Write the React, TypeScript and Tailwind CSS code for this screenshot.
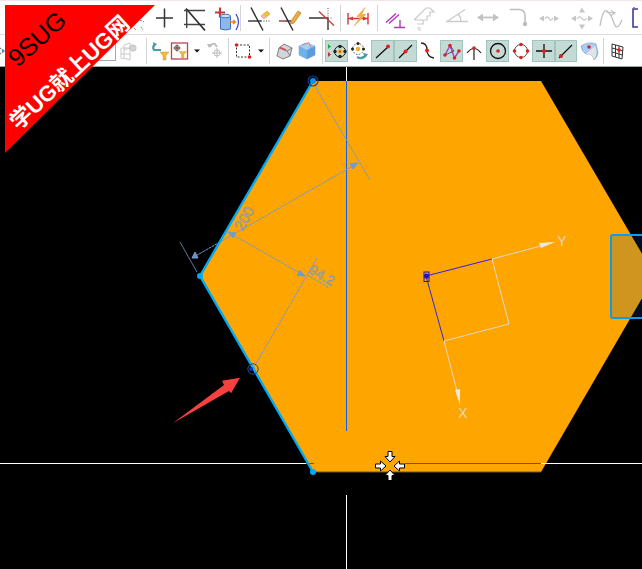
import React from "react";

const ICON_RED = "#e02020";

function Sep() {
  return <div className="w-px h-[26px] bg-[#d4d4d4] shrink-0" />;
}

// top row slot: 24px wide, svg coords centred on the slot
function Top({ className, children }: { className?: string; children: React.ReactNode }) {
  return (
    <svg viewBox="0 0 24 24" fill="none" className={`w-6 h-6 shrink-0 overflow-visible ${className ?? ""}`}>
      {children}
    </svg>
  );
}

// bottom row slot: 20x22
function Bot({ className, children }: { className?: string; children: React.ReactNode }) {
  return (
    <svg viewBox="0 0 20 22" fill="none" className={`w-5 h-[22px] shrink-0 overflow-visible ${className ?? ""}`}>
      {children}
    </svg>
  );
}

function Tile({ className, children }: { className?: string; children: React.ReactNode }) {
  return (
    <div className={`h-[22px] shrink-0 bg-[#c4dbd5] border border-[#a2c5bb] flex items-center justify-center ${className ?? ""}`}>
      <svg viewBox="0 0 20 20" fill="none" className="w-5 h-5 overflow-visible">
        {children}
      </svg>
    </div>
  );
}

function Caret({ className }: { className?: string }) {
  return (
    <svg viewBox="0 0 10 6" className={`w-2.5 h-1.5 shrink-0 ${className ?? ""}`}>
      <path d="M2 1.5H8L5 4.5Z" fill="#111" />
    </svg>
  );
}

const Dot = ({ x, y, r = 1.8 }: { x: number; y: number; r?: number }) => <circle cx={x} cy={y} r={r} fill={ICON_RED} />;

function TopRow() {
  return (
    <div className="flex items-center h-[33px] pl-[126px] bg-white overflow-hidden">
      <Top>
        <path d="M6 17Q12 12 18 16" stroke="#555" strokeDasharray="1.5 1.5" />
        <path d="M8 22L10 24M15 21L17 24" stroke="#c04040" strokeDasharray="1 1" />
      </Top>
      <Top className="ml-[3px]">
        <path d="M3 12H20M11.5 2.5V21.5" stroke="#333" strokeWidth="1.5" />
      </Top>
      <Top className="ml-[6px]">
        <path d="M1 4.5H22M1 18.5H22M3.7 3V22" stroke="#444" strokeWidth="1.4" />
        <path d="M3 2.5L22 24.5" stroke="#333" strokeWidth="1.8" />
      </Top>
      <Top className="ml-[9px]">
        <path d="M-1 6.5H9M4 1.5V11.5" stroke="#c83a3a" strokeWidth="2.2" />
        <path d="M4.5 10V23Q9.5 25 14.5 23V10Z" fill="#8db6ea" stroke="#3f70c2" />
        <ellipse cx="9.5" cy="10" rx="5" ry="1.8" fill="#cfe0f6" stroke="#3f70c2" />
        <path d="M14 16H19M17 14L19.5 16L17 18" stroke="#e8801c" strokeWidth="1.3" />
        <path d="M20 8Q25 16 20 24" stroke="#3838d0" strokeWidth="1.2" />
      </Top>
      <Sep />
      <Top className="ml-[5px]">
        <path d="M2 15H15" stroke="#333" strokeWidth="1.4" />
        <path d="M15 15H24" stroke="#333" strokeDasharray="1 1.5" />
        <path d="M5 1.5L17 24.5" stroke="#333" strokeWidth="1.5" />
        <path d="M15 10L21 5L24 8L18 13Z" fill="#f1c232" stroke="#c89b30" strokeWidth=".6" />
        <path d="M15 10L17 8.4L20 11.4L18 13Z" fill="#f2b8b8" />
      </Top>
      <Top className="ml-[6px]">
        <path d="M3 15H10" stroke="#a03030" strokeWidth="1.4" />
        <path d="M10 15H15" stroke="#333" strokeWidth="1.4" />
        <path d="M5 1.5L17 24.5" stroke="#333" strokeWidth="1.5" />
        <path d="M15 15L22 5L25 7L18 17L14.5 18Z" fill="#f5a83c" stroke="#a87a28" strokeWidth=".7" />
      </Top>
      <Top className="ml-[7px]">
        <path d="M2 12H21M21 12V24" stroke="#333" strokeWidth="1.4" />
        <path d="M21 2V12M21 12H26" stroke="#555" strokeDasharray="1 1.5" />
        <path d="M12 5.5L27 19.5" stroke="#d83a3a" strokeWidth="1.4" />
      </Top>
      <div className="ml-[9px]">
        <Sep />
      </div>
      <Top className="ml-[5px]">
        <path d="M2 7V18.5M22 7V18.5M2 12.5H22" stroke="#d8343a" strokeWidth="1.4" />
        <path d="M2.5 12.5L7 10.5V14.5ZM21.5 12.5L17 10.5V14.5Z" fill="#d8343a" />
        <path d="M19 1.5L11 10.5H15L8 20L20 8.5H15.5Z" fill="#f7b338" stroke="#e8962a" strokeWidth=".5" />
      </Top>
      <div className="ml-[7px]">
        <Sep />
      </div>
      <Top className="ml-[4px]">
        <path d="M4 16.5L14 7.5M7 17.5L17 8.5" stroke="#b43cc4" strokeWidth="1.5" />
        <path d="M12 21.5H23M18 14V21.5" stroke="#a83cb8" strokeWidth="1.4" />
      </Top>
      <Top className="ml-[6px]">
        <path d="M2 14L14 2H18L22 6H18V10H15V14H11V18M3 14H11M5 18H12M5 22H9" stroke="#cacaca" strokeWidth="1.2" />
        <path d="M6 24H9" stroke="#cacaca" />
      </Top>
      <Top className="ml-[8px]">
        <path d="M2 15.5H24M3 15.5L21 3.5M14 7.5Q17 11 17 15.5" stroke="#cccccc" strokeWidth="1.4" />
      </Top>
      <Top className="ml-[8px]">
        <path d="M6 11.5H18" stroke="#c2c2c2" strokeWidth="1.8" />
        <path d="M1 11.5L7 7.5V15.5ZM23 11.5L17 7.5V15.5Z" fill="#c2c2c2" />
      </Top>
      <Top className="ml-[9px]">
        <path d="M1 3.5H10Q16 3.5 16 10V17" stroke="#bdbdbd" strokeWidth="1.5" />
        <circle cx="16" cy="18" r="2.2" fill="#bdbdbd" />
      </Top>
      <Top className="ml-[4px]">
        <path d="M2 12.5L7 9.5V15.5ZM22 12.5L17 9.5V15.5Z" fill="#c6c6c6" />
        <path d="M8 13Q10 9 12 12.5T16 12" stroke="#c6c6c6" strokeWidth="1.2" />
      </Top>
      <Top className="ml-[9px]">
        <path d="M1 12.5L6 9.5V15.5ZM23 12.5L18 9.5V15.5ZM12 1.5L9 6.5H15ZM12 23.5L9 18.5H15Z" fill="#c6c6c6" />
        <path d="M7 13Q9.5 9 12 12.5T17 12" stroke="#c6c6c6" strokeWidth="1.2" />
      </Top>
      <Top className="ml-[5px]">
        <path d="M1 20Q4 2 8 5T15 17T23 14" stroke="#bfbfbf" strokeWidth="1.3" />
        <path d="M7 6L15 7M12 4.5L16 7L12 9.5" stroke="#bfbfbf" strokeWidth="1.1" />
      </Top>
      <Top className="ml-[1px]">
        <path d="M14 3H9V21H14" stroke="#3c3c9c" strokeWidth="1.6" />
        <path d="M10 3V1" stroke="#b43cc4" strokeWidth="1.4" />
      </Top>
    </div>
  );
}

function BottomRow() {
  return (
    <div className="flex items-center h-[31px] bg-white overflow-hidden">
      <svg viewBox="0 0 5 10" className="w-[5px] h-2.5 shrink-0">
        <path d="M0 2L5 5M0 8L5 5" stroke="#334" strokeDasharray="1 1" />
        <circle cx="3" cy="5" r="1.2" fill="#4a90d0" />
      </svg>
      <div className="ml-[15px] w-[96px] h-[21px] shrink-0 bg-white border border-[#a8a8a8]" />
      <Bot className="ml-[2px]">
        <path d="M6 5L12 3V8L6 10ZM6 10V18L12 20V8M3 8H12M3 14H12M3 8V18L6 19" stroke="#c4c4c4" strokeWidth=".9" />
        <circle cx="15" cy="8" r="3.2" fill="#d4d4d4" stroke="#bdbdbd" strokeWidth=".7" />
      </Bot>
      <div className="ml-[8px]">
        <Sep />
      </div>
      <Bot className="ml-[3px]">
        <path d="M5 4Q2 7 4 10H11" stroke="#4a9aa8" strokeWidth="2.2" />
        <path d="M3 2L7 4L4 7Z" fill="#4a9aa8" />
        <path d="M10 12H19L16 15.5V20H13V15.5Z" fill="#f0b93c" stroke="#d09a30" strokeWidth=".5" />
      </Bot>
      <Bot>
        <rect x="1.5" y="3" width="16" height="16" stroke="#c44050" strokeWidth="1.3" fill="#fff" />
        <circle cx="7" cy="8" r="2.4" stroke="#444" strokeWidth=".9" />
        <path d="M7 4.5V11.5M3.5 8H10.5" stroke="#444" strokeWidth=".9" />
        <Dot x={7} y={8} r={0.9} />
        <path d="M9 11.5H16.5L14 14.5V18H11.5V14.5Z" fill="#f0b93c" stroke="#d09a30" strokeWidth=".4" />
      </Bot>
      <Caret className="ml-[2px]" />
      <Bot className="ml-[4px]">
        <path d="M4 7Q5 3 9 4L11 7" stroke="#bcbcbc" strokeWidth="1.8" />
        <path d="M1 4L6 4L3 8Z" fill="#bcbcbc" />
        <circle cx="11" cy="13" r="3" stroke="#bcbcbc" />
        <path d="M11 8V18M6 13H16" stroke="#bcbcbc" />
      </Bot>
      <div className="ml-[2px]">
        <Sep />
      </div>
      <Bot className="ml-[4px]">
        <rect x="3.5" y="5" width="13" height="12" stroke="#333" strokeDasharray="2 1.5" />
        <Dot x={3.5} y={5} />
        <Dot x={16.5} y={17} />
      </Bot>
      <Caret className="ml-[3px]" />
      <div className="ml-[3px]">
        <Sep />
      </div>
      <Bot className="ml-[4px]">
        <path d="M3 16L5 8L10 4L18 8L16 16L9 19Z" fill="#d4d4dc" stroke="#666" strokeWidth=".8" />
        <path d="M5 8L13 11L16 16M13 11L18 8" stroke="#666" strokeWidth=".7" />
        <path d="M6 7.5L12 10" stroke="#e04848" strokeWidth="1.4" />
      </Bot>
      <Bot className="ml-[3px]">
        <path d="M2 6L9 3L18 6V15L10 19L2 15Z" fill="#a6d0f2" stroke="#8aa8d0" strokeWidth=".6" />
        <path d="M2 6L10 10V19L2 15Z" fill="#6fb1ea" />
        <path d="M10 10L18 6V15L10 19Z" fill="#5c9be0" />
        <path d="M5 5L12 2.5M12 2.5L14 8" stroke="#e06060" strokeWidth=".7" />
      </Bot>
      <div className="ml-[5px]">
        <Sep />
      </div>
      <Tile className="ml-[2px] w-[23px]">
        <path d="M1 3V8L4 5.5Z" fill="#1fae3a" />
        <path d="M1 11V16L4 13.5Z" fill="#d82a2a" />
        <circle cx="13" cy="10.5" r="5.5" stroke="#222" />
        <circle cx="13" cy="5.5" r="1.7" fill="#222" />
        <circle cx="13" cy="15.5" r="1.7" fill="#222" />
        <circle cx="8" cy="10.5" r="1.7" fill="#222" />
        <circle cx="18" cy="10.5" r="1.7" fill="#222" />
        <path d="M13 7.5L16 10.5L13 13.5L10 10.5Z" fill="#f0c020" />
        <Dot x={13} y={10.5} r={1} />
      </Tile>
      <Bot>
        <circle cx="10" cy="9" r="5.5" stroke="#555" strokeDasharray="1.5 1.5" />
        <circle cx="10" cy="3.5" r="1.5" fill="#222" />
        <circle cx="4.5" cy="9" r="1.5" fill="#222" />
        <circle cx="15.5" cy="9" r="1.5" fill="#222" />
        <circle cx="10" cy="9" r="2.2" fill="#f0b020" />
        <path d="M9 17Q14 20 18 15" stroke="#4a9aa8" strokeWidth="2.2" />
        <path d="M15 13L20 14L17 18Z" fill="#4a9aa8" />
      </Bot>
      <Tile className="ml-[3px] w-[23px]">
        <path d="M3 17L16 5" stroke="#111" strokeWidth="1.3" />
        <Dot x={15} y={5.5} r={2} />
      </Tile>
      <Tile className="w-[23px]">
        <path d="M3 17L16 4" stroke="#111" strokeWidth="1.3" />
        <Dot x={9.5} y={10.5} r={2} />
      </Tile>
      <Bot>
        <path d="M4 3Q10 3 10 10T17 18" stroke="#222" strokeWidth="1.3" />
        <Dot x={10} y={10.5} r={2} />
      </Bot>
      <Tile className="ml-[3px] w-[23px]">
        <path d="M3 14L8 4.5L12.5 17L17 10" stroke="#a040d0" strokeWidth="1.4" />
        <path d="M8 4.5L12 10L3 14" stroke="#222" strokeWidth=".7" />
        <Dot x={3} y={14} />
        <Dot x={8} y={4.5} />
        <Dot x={12.5} y={17} />
        <Dot x={17} y={10} />
      </Tile>
      <Bot className="ml-[1px]">
        <path d="M3 13Q10 4 17 13M10 7V20" stroke="#222" strokeWidth="1.2" />
        <Dot x={10} y={8} />
      </Bot>
      <Tile className="ml-[2px] w-[23px]">
        <circle cx="10" cy="10" r="7.5" stroke="#111" strokeWidth="1.3" />
        <Dot x={10} y={10} />
      </Tile>
      <Bot className="ml-[2px]">
        <circle cx="10" cy="11" r="6.5" stroke="#444" />
        <Dot x={10} y={4.5} />
        <Dot x={10} y={17.5} />
        <Dot x={3.5} y={11} />
        <Dot x={16.5} y={11} />
      </Bot>
      <Tile className="ml-[1px] w-[23px]">
        <path d="M2 10H18M10 3V17" stroke="#111" strokeWidth="1.3" />
        <Dot x={10} y={10} r={2} />
      </Tile>
      <Tile className="w-[22px]">
        <path d="M3 17L16 4" stroke="#111" strokeWidth="1.3" />
        <Dot x={5} y={15} r={2} />
      </Tile>
      <Bot className="ml-[2px]">
        <path d="M2 6Q10 1 17 4L19 13Q18 18 15 20Q14 13 7 14Q3 12 2 6Z" fill="#a8cdf2" stroke="#7a9cc8" strokeWidth=".7" />
        <path d="M15 20Q14 13 7 14L16 6Q19 12 15 20Z" fill="#e4e4e4" />
        <Dot x={10} y={7} />
      </Bot>
      <div className="ml-[4px]">
        <Sep />
      </div>
      <Bot className="ml-[4px]">
        <path d="M4 4L15 7L14 19L4 16ZM7.5 5V17M11 6V18M4 8L15 11M4 12L14.5 15" stroke="#333" />
        <Dot x={11} y={10} />
      </Bot>
    </div>
  );
}

function Viewport() {
  const dim = "#6f9bd2";
  const arrow = (d: string, key: string) => <path key={key} d={d} fill="#fff" stroke="#000" strokeWidth="1" />;
  return (
    <div className="flex-1 min-h-0 bg-black relative overflow-hidden">
      <svg viewBox="0 67 642 502" className="block w-full h-full" fill="none">
        {/* part */}
        <polygon points="313,81 541,81 655,276 541,472 313,472 200,276" fill="#ffa500" />
        <path d="M313 472H541" stroke="#7a5200" />
        <rect x="611" y="235" width="44" height="83" rx="2" fill="#004fa3" fillOpacity=".19" stroke="#0a9cf0" strokeWidth="2" />

        {/* datum lines */}
        <path d="M346.5 67V81M346.5 495V569M0 463.5H306M541 463.5H642" stroke="#fff" />
        <path d="M346.5 81V431M306 463.5H314M405 463.5H541" stroke="#1060f0" />

        {/* dimensions */}
        <g stroke={dim} strokeWidth="1">
          <path d="M358 163L192 258M228 232L305 276M307 275L328 287M317 258L253 369M316 88L370 180" strokeDasharray="3 .6" />
          <path d="M180 242L197 272" stroke="#5c7896" />
          <path d="M192 258L198 258L195 252Z" fill="#6f8fb8" />
          <path d="M358 163L350 163.5L353 169Z" fill={dim} />
          <path d="M305 276L297 275.5L300 270.5Z" fill={dim} />
          <path d="M228 232L236 233L233 238Z" fill={dim} />
        </g>
        <text x="245" y="223" transform="rotate(-60 245 219)" textAnchor="middle" fontFamily="Liberation Sans, sans-serif" fontSize="15" fill="none" stroke={dim} strokeWidth=".6">
          200
        </text>
        <text x="322" y="280" transform="rotate(30 322 275)" textAnchor="middle" fontFamily="Liberation Sans, sans-serif" fontSize="14" fill="none" stroke={dim} strokeWidth=".6">
          94.2
        </text>

        {/* selected edges */}
        <path d="M313 81L200 276L313 472" stroke="#00aaf5" strokeWidth="2.4" />
        <circle cx="313" cy="81" r="5" stroke="#12408c" strokeWidth="1.2" />
        <circle cx="313" cy="81" r="3" fill="#0a90f0" />
        <circle cx="200" cy="276" r="3" fill="#00aaf5" />
        <circle cx="313" cy="472" r="3" fill="#00aaf5" />
        <circle cx="253" cy="369" r="5.2" stroke="#2a4a8c" strokeWidth="1" />
        <circle cx="251" cy="369" r="2" fill="#1030c0" />

        {/* csys */}
        <path d="M426 276L492 259M426 276L444 341" stroke="#3020e0" />
        <path d="M492 259L552 243M492 259L509 324L444 341L458 395" stroke="#dcd8cc" />
        <path d="M539 243L555 242L541 248Z" fill="#e8e8e0" />
        <path d="M455 390L460 405L460 389Z" fill="#e8e8e0" />
        <rect x="424" y="272" width="5" height="9.5" stroke="#2010d0" />
        <circle cx="426.5" cy="276" r="2.6" fill="#2010d0" />
        <text x="562" y="246" textAnchor="middle" fontFamily="Liberation Sans, sans-serif" fontSize="14" fill="#e0d8c4">
          Y
        </text>
        <text x="463" y="418" textAnchor="middle" fontFamily="Liberation Sans, sans-serif" fontSize="14" fill="#e0d8c4">
          X
        </text>

        {/* pointer */}
        <polygon points="172.7,423.3 224,385 222,380.7 240,377.7 231,393.3 229,391" fill="#f84040" />

        {/* snap cursor */}
        {arrow("M390 462L385 456.5H388V451.5H392V456.5H395Z", "t")}
        {arrow("M390 470L385 475.5H388V480.5H392V475.5H395Z", "b")}
        {arrow("M386 466L380.5 461V464H375.5V468H380.5V471Z", "l")}
        {arrow("M394 466L399.5 461V464H404.5V468H399.5V471Z", "r")}
      </svg>
    </div>
  );
}

function App() {
  return (
    <div className="relative w-[642px] h-[569px] overflow-hidden flex flex-col bg-white font-['Liberation_Sans','Noto_Sans_CJK_SC',sans-serif]">
      <div className="h-px bg-[#efe6e8]" />
      <TopRow />
      <div className="h-px bg-[#dcdcdc]" />
      <BottomRow />
      <div className="h-px bg-[#9aa5a6]" />
      <Viewport />

      {/* watermark ribbon */}
      <div className="absolute left-[5px] top-[5px] w-[150px] h-[148px] bg-[#ff0000] [clip-path:polygon(0_0,100%_0,0_100%)]">
        <div className="absolute left-[32px] top-[34px] -translate-x-1/2 -translate-y-1/2 rotate-[-42deg] whitespace-nowrap text-[25px] leading-none text-black">
          9SUG
        </div>
        <div className="absolute left-[65px] top-[68px] -translate-x-1/2 -translate-y-1/2 rotate-[-43deg] whitespace-nowrap text-[22px] leading-none font-bold text-white">
          学UG就上UG网
        </div>
      </div>
    </div>
  );
}

export default App;
